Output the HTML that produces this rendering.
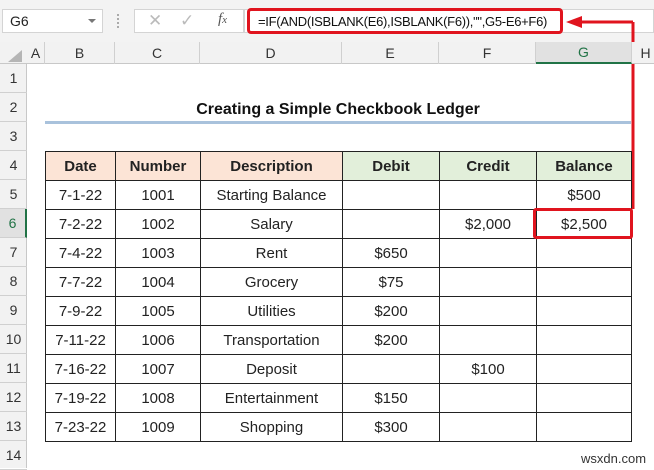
<!DOCTYPE html><html><head><style>
body{margin:0;width:654px;height:468px;overflow:hidden;background:#fff;font-family:"Liberation Sans",sans-serif;position:relative}
.a{position:absolute;box-sizing:border-box}
.c{display:flex;align-items:center;justify-content:center;font-size:14px;color:#222;white-space:nowrap}
.h{color:#333;font-size:14px}
</style></head><body>
<div class="a" style="left:0;top:0;width:654px;height:42px;background:#f3f3f3"></div>
<div class="a" style="left:2px;top:9px;width:101px;height:24px;background:#fff;border:1px solid #d4d4d4;font-size:14px;padding:3px 0 0 7px;color:#222">G6</div>
<div class="a" style="left:88px;top:19px;width:0;height:0;border-left:4px solid transparent;border-right:4px solid transparent;border-top:4px solid #777"></div>
<div class="a" style="left:117px;top:14px;width:2px;height:14px;border-left:2px dotted #aaa"></div>
<div class="a" style="left:134px;top:9px;width:110px;height:24px;background:#fff;border:1px solid #d4d4d4"></div>
<div class="a" style="left:148px;top:11px;font-size:17px;color:#bbb">✕</div>
<div class="a" style="left:180px;top:11px;font-size:17px;color:#bbb">✓</div>
<div class="a" style="left:218px;top:11px;font-size:15px;color:#555;font-style:italic;font-family:'Liberation Serif',serif">f<span style="font-size:11px">x</span></div>
<div class="a" style="left:244px;top:9px;width:410px;height:24px;background:#fff;border:1px solid #d4d4d4"></div>
<div class="a" style="left:247px;top:8px;width:316px;height:26px;border:3px solid #e0141e;border-radius:4px;font-size:13px;letter-spacing:-0.3px;white-space:nowrap;overflow:hidden;padding:3px 0 0 8px;color:#111;background:#fff">=IF(AND(ISBLANK(E6),ISBLANK(F6)),"",G5-E6+F6)</div>
<svg class="a" style="left:0;top:0" width="654" height="468"><path d="M633 22 V209" stroke="#e0141e" stroke-width="3" fill="none"/><path d="M633 22 H578" stroke="#e0141e" stroke-width="3"/><path d="M566 22 L582 16 L582 28Z" fill="#e0141e"/></svg>
<div class="a" style="left:0;top:42px;width:654px;height:22px;background:#f2f2f2;border-bottom:1px solid #c8c8c8"></div>
<div class="a" style="left:8px;top:50px;width:0;height:0;border-left:14px solid transparent;border-bottom:12px solid #b5b5b5"></div>
<div class="a" style="left:0;top:64px;width:27px;height:404px;background:#f2f2f2;border-right:1px solid #c8c8c8"></div>
<div id="cols"></div>
<div id="rows"></div>
<div class="a" style="left:45px;top:121px;width:586px;height:3px;background:#a9c2dc"></div>
<div class="a c" style="left:45px;top:96px;width:586px;height:28px;font-weight:bold;font-size:16px;color:#111">Creating a Simple Checkbook Ledger</div>
<div id="tbl"></div>
<div class="a" style="left:533px;top:208px;width:100px;height:31px;border:3px solid #e0141e;border-radius:3px"></div>
<div class="a" style="left:581px;top:451px;font-size:13px;color:#333">wsxdn.com</div>
<script>
var cx=[27,45,115,200,342,439,536,632,660],L="ABCDEFGH",s="";
for(var i=0;i<8;i++){var g=i==6;s+='<div class="a c h" style="left:'+cx[i]+'px;top:42px;width:'+(cx[i+1]-cx[i])+'px;height:22px;border-right:1px solid #d0d0d0;'+(g?'background:#e1e1e1;color:#217346;border-bottom:2px solid #217346;':'')+'">'+L[i]+'</div>';}
document.getElementById('cols').innerHTML=s;s="";
var ry=[64,93,122,151];for(var r=4;r<=14;r++)ry.push(151+(r-3)*29);
for(var r=0;r<14;r++){var g=r==5;s+='<div class="a c h" style="left:0;top:'+ry[r]+'px;width:27px;height:'+(ry[r+1]-ry[r])+'px;border-bottom:1px solid #d0d0d0;'+(g?'background:#e1e1e1;color:#217346;border-right:2px solid #217346;':'')+'">'+(r+1)+'</div>';}
document.getElementById('rows').innerHTML=s;s="";
var d=[["Date","Number","Description","Debit","Credit","Balance"],["7-1-22","1001","Starting Balance","","","$500"],["7-2-22","1002","Salary","","$2,000","$2,500"],["7-4-22","1003","Rent","$650","",""],["7-7-22","1004","Grocery","$75","",""],["7-9-22","1005","Utilities","$200","",""],["7-11-22","1006","Transportation","$200","",""],["7-16-22","1007","Deposit","","$100",""],["7-19-22","1008","Entertainment","$150","",""],["7-23-22","1009","Shopping","$300","",""]];
var tx=[45,115,200,342,439,536,631];
for(var r=0;r<10;r++)for(var c=0;c<6;c++){var bg=r==0?(c<3?'#fce4d6':'#e2efda'):'#fff';s+='<div class="a c" style="left:'+tx[c]+'px;top:'+(151+r*29)+'px;width:'+(tx[c+1]-tx[c]+1)+'px;height:30px;border:1px solid #222;background:'+bg+';'+(r==0?'font-weight:bold;font-size:15px;':'font-size:15px;')+'">'+d[r][c]+'</div>';}
document.getElementById('tbl').innerHTML=s;
</script>
</body></html>
